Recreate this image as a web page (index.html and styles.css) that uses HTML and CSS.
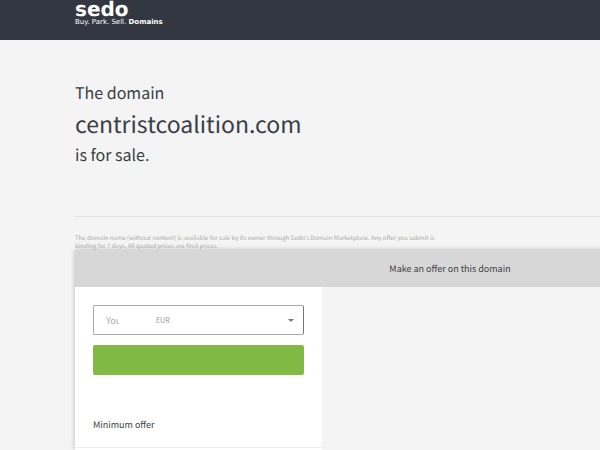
FILE: index.html
```
<!DOCTYPE html>
<html lang="en">
<head>
    <meta charset="UTF-8">
    <meta name="viewport" content="width=device-width, initial-scale=1.0">
    <title>centristcoalition.com is for sale</title>
    <link rel="stylesheet" href="styles.css">
</head>
<body>
    <header class="header">
        <div class="container">
            <a class="logo" href="#">
                <span class="logo-name">sedo</span>
                <span class="logo-claim">Buy. Park. Sell. <b>Domains</b></span>
            </a>
        </div>
    </header>

    <main class="container">
        <h1 class="headline">
            <span>The domain</span>
            <span class="domain">centristcoalition.com</span>
            <span>is for sale.</span>
        </h1>

        <p class="disclaimer">The domain name (without content) is available for sale by its owner through Sedo's Domain Marketplace. Any offer you submit is binding for 7 days. All quoted prices are final prices.</p>

        <section class="panel">
            <h2 class="panel-title">Make an offer on this domain</h2>
            <div class="panel-body">
                <form class="offer">
                    <div class="offer-field">
                        <input class="amount" type="text" placeholder="Your offer" aria-label="Your offer">
                        <select class="currency" aria-label="Currency">
                            <option>EUR</option>
                        </select>
                        <span class="arrow"></span>
                    </div>
                    <button class="submit" type="submit" aria-label="Submit offer"></button>
                </form>
                <div class="minimum">Minimum offer</div>
            </div>
        </section>
    </main>
</body>
</html>
```
FILE: styles.css
```
* {
    margin: 0;
    padding: 0;
    box-sizing: border-box;
}

body {
    font-family: "Noto Sans CJK SC", "Open Sans", sans-serif;
    text-rendering: geometricPrecision;
    background: #f4f4f4;
    color: #3a3f45;
    overflow: hidden;
}

.container {
    min-width: 750px;
    margin: 0 75px;
}

.header {
    height: 40px;
    background: #333741;
}

.logo {
    display: block;
    color: #fff;
    font-family: "DejaVu Sans", Verdana, sans-serif;
    text-decoration: none;
}

.logo-name {
    display: block;
    font-size: 20px;
    line-height: 18px;
    font-weight: bold;
}

.logo-claim {
    display: block;
    font-size: 7px;
    line-height: 9px;
}

.headline {
    padding: 37px 0 46px;
    border-bottom: 1px solid #e2e2e2;
    font-size: 16px;
    line-height: 31px;
    font-weight: normal;
}

.headline span {
    display: block;
}

.headline .domain {
    font-size: 23px;
}

.disclaimer {
    width: 360px;
    margin-top: 17px;
    color: #aaa;
    font-size: 6px;
    line-height: 8px;
}

.panel {
    background: #f4f4f4;
    box-shadow: 0 0 5px rgba(0, 0, 0, 0.25);
}

.panel-title {
    background: #d7d7d7;
    color: #444;
    font-size: 9px;
    line-height: 37px;
    font-weight: normal;
    text-align: center;
}

.panel-body {
    width: 247px;
    padding-bottom: 2px;
    background: #fff;
}

.offer {
    padding: 18px 18px 32px;
}

.offer-field {
    display: flex;
    align-items: center;
    height: 30px;
    margin-bottom: 10px;
    padding: 0 9px 0 12px;
    border: 1px solid #aaa;
    border-right-color: #777;
    border-radius: 2px;
}

.amount {
    width: 13px;
    margin-right: 37px;
    border: 0;
    background: transparent;
    font-family: inherit;
    font-size: 9px;
}

.amount::placeholder {
    color: #aaa;
}

.currency {
    flex: 1;
    border: 0;
    background: transparent;
    color: #999;
    font-family: inherit;
    font-size: 7px;
    appearance: none;
}

.arrow {
    border: 3px solid transparent;
    border-top-color: #777;
    border-bottom: 0;
}

.submit {
    display: block;
    width: 100%;
    height: 30px;
    border: 0;
    border-radius: 2px;
    background: #80ba45;
}

.minimum {
    height: 41px;
    padding-top: 8px;
    padding-left: 18px;
    border-bottom: 1px solid #eee;
    font-size: 9px;
    line-height: 20px;
}
```
